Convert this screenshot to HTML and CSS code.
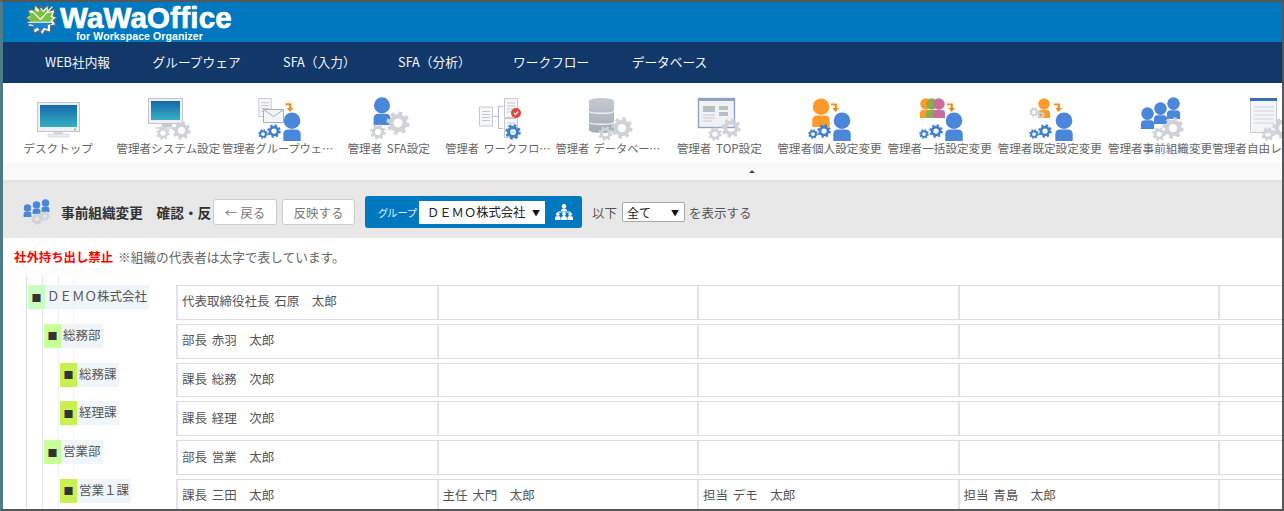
FILE: index.html
```html
<!DOCTYPE html>
<html lang="ja">
<head>
<meta charset="utf-8">
<title>WaWaOffice</title>
<link rel="stylesheet" href="styles.css">
</head>
<body>
<svg class="defs" width="0" height="0">
  <defs>
    <linearGradient id="gScreen" x1="0" y1="0" x2="0" y2="1"><stop offset="0" stop-color="#1668a8"/><stop offset="1" stop-color="#36b0c4"/></linearGradient>
    <linearGradient id="gDb" x1="0" y1="0" x2="0" y2="1"><stop offset="0" stop-color="#c6cad2"/><stop offset="1" stop-color="#a4a9b5"/></linearGradient>
    <linearGradient id="gLogo" x1="0" y1="0" x2="0" y2="1"><stop offset=".56" stop-color="#7ac143"/><stop offset=".56" stop-color="#1f82c8"/></linearGradient>
    <symbol id="gear" viewBox="0 0 24 24" overflow="visible">
      <circle cx="12" cy="12" r="9.6" fill="none" stroke="currentColor" stroke-width="4" stroke-dasharray="3.8 3.74"/>
      <circle cx="12" cy="12" r="6.8" fill="none" stroke="currentColor" stroke-width="4.6"/>
    </symbol>
    <symbol id="person" viewBox="0 0 20 30">
      <circle cx="10" cy="9" r="8.6" fill="currentColor"/>
      <path d="M1 30V23q0-5 5-5h8q5 0 5 5v7z" fill="currentColor"/>
    </symbol>
    <symbol id="arrow" viewBox="0 0 10 11">
      <path d="M0 1.500h6.500v5H9L5 11 1.500 6.500H4V3.500H0z" fill="#f98a14"/>
    </symbol>
    <symbol id="doc" viewBox="0 0 14 20">
      <path d="M.5.5h13v19H.5z" fill="#f6f7f9" stroke="#c4c8cf"/>
      <path d="M3 5h8M3 8h8M3 11h8M3 14h8" stroke="#c4c8cf"/>
    </symbol>
  </defs>
</svg>
<div class="frame">
  <header class="brand">
    <div class="logo">
      <svg class="logo-mark" viewBox="0 0 36 36" width="33" height="33">
        <path d="M18 3l3 4 5-5 1 7 7-2-2 7 4 2-4 3 3 5-6 1 0 7-6-2-3 5-3-5-6 3-1-7-6-1 3-6-5-3 5-3-3-6 7 2 1-7 5 5z" fill="#fff" stroke="#5c6b70" stroke-width="1.400"/>
        <path d="M18 6l3 4 4-4 1 5 5-1-2 5 3 2-3 2 2 4-5 1 0 5-4-2-4 5-3-5-4 2-1-5-5-1 2-4-4-2 4-2-2-5 5 1 1-5 4 4z" fill="url(#gLogo)"/>
        <path d="M18 18L31 4M18 18L8 8M4 21h28" stroke="#fff" stroke-width="1.300"/>
      </svg>
      <div class="logo-text">
        <div class="logo-name">WaWaOffice</div>
        <div class="logo-sub">for Workspace Organizer</div>
      </div>
    </div>
  </header>
  <nav class="mainnav">
    <span>WEB社内報</span>
    <span>グループウェア</span>
    <span>SFA（入力）</span>
    <span>SFA（分析）</span>
    <span>ワークフロー</span>
    <span>データベース</span>
  </nav>
  <section class="tools">
    <div class="tool">
      <svg class="ico" viewBox="0 0 56 44">
        <rect x="7.500" y="5.500" width="42" height="29" fill="#eef0f3" stroke="#c2c6cc"/>
        <rect x="10" y="8" width="37" height="22" fill="url(#gScreen)"/>
        <circle cx="45" cy="32.500" r="1" fill="#7ac143"/>
        <path d="M24 35h9v2h-9z" fill="#d6d9de"/><path d="M18 37h21v3H18z" fill="#eceef1" stroke="#c8ccd2" stroke-width=".6"/>
      </svg>
      <div class="tool-label">デスクトップ</div>
    </div>
    <div class="tool">
      <svg class="ico" viewBox="0 0 56 44">
        <rect x="8.500" y="1.500" width="34" height="25" fill="#eef0f3" stroke="#c2c6cc"/>
        <rect x="11" y="4" width="29" height="19" fill="url(#gScreen)"/>
        <path d="M22 27h10v3H22z" fill="#c8ccd2"/><path d="M15 30h22v2H15z" fill="#dcdfe4"/>
        <use href="#gear" class="c-gear" x="16" y="29" width="14" height="14"/>
        <use href="#gear" class="c-gear" x="32" y="24" width="19" height="19"/>
      </svg>
      <div class="tool-label">管理者システム設定</div>
    </div>
    <div class="tool">
      <svg class="ico" viewBox="0 0 56 44">
        <use href="#doc" x="8" y="1" width="14" height="19"/>
        <path d="M13.500 12.500h20v13h-20z" fill="#f4f5f7" stroke="#a8adb5"/>
        <path d="M13.500 12.500l10 7 10-7" fill="none" stroke="#a8adb5"/>
        <use href="#arrow" x="35" y="5" width="10" height="10"/>
        <use href="#person" class="c-blue" x="32" y="15" width="20" height="29"/>
        <use href="#gear" class="c-bluegear" x="17" y="27" width="14" height="14"/>
        <use href="#gear" class="c-bluegear" x="8" y="32" width="10" height="10"/>
      </svg>
      <div class="tool-label cut">管理者グループウェア設定</div>
    </div>
    <div class="tool">
      <svg class="ico" viewBox="0 0 56 44">
        <use href="#person" class="c-blue" x="11" y="0" width="20" height="28"/>
        <use href="#gear" class="c-gear" x="25" y="14" width="24" height="24"/>
        <use href="#gear" class="c-gear" x="9" y="27" width="16" height="16"/>
      </svg>
      <div class="tool-label">管理者 SFA設定</div>
    </div>
    <div class="tool">
      <svg class="ico" viewBox="0 0 56 44">
        <use href="#doc" x="8" y="9" width="14" height="21"/>
        <use href="#doc" x="33" y="1" width="14" height="20"/>
        <use href="#doc" x="33" y="21" width="14" height="20"/>
        <path d="M22 19.500h5.500M32 9.500h-4.500v22H32" fill="none" stroke="#b8bcc4"/>
        <circle cx="45" cy="16" r="5" fill="#e8433f"/>
        <path d="M43 16l1.500 1.500L47 14.500" fill="none" stroke="#fff" stroke-width="1.200"/>
        <use href="#gear" class="c-bluegear" x="34" y="27" width="16" height="16"/>
      </svg>
      <div class="tool-label cut cut-shift">管理者 ワークフロー設定</div>
    </div>
    <div class="tool">
      <svg class="ico" viewBox="0 0 56 44">
        <path d="M8 4c0-4 25-4 25 0v29c0 4-25 4-25 0z" fill="url(#gDb)"/>
        <path d="M8 14c0 3 25 3 25 0M8 25c0 3 25 3 25 0" fill="none" stroke="#f2f3f5" stroke-width="1.400"/>
        <use href="#gear" class="c-gear" x="30" y="20" width="22" height="22"/>
        <use href="#gear" class="c-gear" x="17" y="29" width="15" height="15"/>
      </svg>
      <div class="tool-label cut cut-shift">管理者 データベース設定</div>
    </div>
    <div class="tool">
      <svg class="ico" viewBox="0 0 56 44">
        <rect x="7.500" y="1.500" width="36" height="29" fill="#f1f2f3" stroke="#8ea3c4" stroke-width="1.400"/>
        <path d="M7 1h37v3H7z" fill="#8ea3c4"/>
        <path d="M12 9h12v6H12zM28 9h9v4h-9zM28 15h9v4h-9z" fill="#b8bec6"/>
        <path d="M12 18h12M12 21h12M12 24h9" stroke="#c6cbd2"/>
        <use href="#gear" class="c-gear" x="30" y="21" width="20" height="20"/>
        <use href="#gear" class="c-gear" x="17" y="30" width="14" height="14"/>
      </svg>
      <div class="tool-label">管理者 TOP設定</div>
    </div>
    <div class="tool">
      <svg class="ico" viewBox="0 0 56 44">
        <use href="#person" class="c-orange" x="10" y="1" width="20" height="29"/>
        <use href="#arrow" x="30" y="5" width="9" height="10"/>
        <use href="#person" class="c-blue" x="31" y="15" width="20" height="29"/>
        <use href="#gear" class="c-bluegear" x="16" y="27" width="14" height="14"/>
        <use href="#gear" class="c-bluegear" x="7" y="32" width="10" height="10"/>
      </svg>
      <div class="tool-label">管理者個人設定変更</div>
    </div>
    <div class="tool">
      <svg class="ico" viewBox="0 0 56 44">
        <use href="#person" class="c-orange" x="7" y="1" width="14" height="20"/>
        <use href="#person" class="c-green" x="13" y="1" width="14" height="20"/>
        <use href="#person" class="c-pink" x="20" y="1" width="14" height="20"/>
        <use href="#arrow" x="35" y="5" width="9" height="10"/>
        <use href="#person" class="c-blue" x="32" y="15" width="20" height="29"/>
        <use href="#gear" class="c-bluegear" x="17" y="27" width="14" height="14"/>
        <use href="#gear" class="c-bluegear" x="7" y="32" width="10" height="10"/>
      </svg>
      <div class="tool-label">管理者一括設定変更</div>
    </div>
    <div class="tool">
      <svg class="ico" viewBox="0 0 56 44">
        <use href="#person" class="c-orange" x="15" y="1" width="14" height="20"/>
        <use href="#gear" class="c-gear" x="7" y="10" width="10" height="10"/>
        <use href="#gear" class="c-gear" x="15" y="14" width="8" height="8"/>
        <use href="#arrow" x="32" y="5" width="9" height="10"/>
        <use href="#person" class="c-blue" x="32" y="15" width="20" height="29"/>
        <use href="#gear" class="c-bluegear" x="16" y="27" width="14" height="14"/>
        <use href="#gear" class="c-bluegear" x="7" y="32" width="10" height="10"/>
      </svg>
      <div class="tool-label">管理者既定設定変更</div>
    </div>
    <div class="tool">
      <svg class="ico" viewBox="0 0 56 44">
        <use href="#person" class="c-blue" x="34" y="0" width="15" height="22"/>
        <use href="#person" class="c-blue" x="21" y="5" width="15" height="22"/>
        <use href="#person" class="c-blue" x="8" y="10" width="15" height="22"/>
        <use href="#gear" class="c-gear" x="30" y="20" width="22" height="22"/>
        <use href="#gear" class="c-gear" x="20" y="30" width="14" height="14"/>
      </svg>
      <div class="tool-label">管理者事前組織変更</div>
    </div>
    <div class="tool">
      <svg class="ico" viewBox="0 0 56 44">
        <rect x="8.500" y="1.500" width="26" height="34" fill="#f3f5f8" stroke="#c4c8cf"/>
        <path d="M8 1h27v3H8z" fill="#3a6fb5"/>
        <path d="M12 10h20M12 14h20M12 18h20M12 22h20M12 26h20" stroke="#d0d4da"/>
        <use href="#gear" class="c-gear" x="30" y="20" width="22" height="22"/>
        <use href="#gear" class="c-gear" x="19" y="30" width="14" height="14"/>
      </svg>
      <div class="tool-label">管理者自由レイアウト</div>
    </div>
  </section>
  <div class="collapse"><span class="caret"></span></div>
  <section class="bar">
    <svg class="bar-ico" viewBox="0 0 28 28">
      <use href="#person" class="c-blue" x="19" y="1" width="9" height="13"/>
      <use href="#person" class="c-blue" x="10" y="3" width="9" height="13"/>
      <use href="#person" class="c-blue" x="1" y="6" width="9" height="13"/>
      <use href="#gear" class="c-gear" x="9" y="15" width="12" height="12"/>
      <use href="#gear" class="c-gear" x="18" y="13" width="10" height="10"/>
    </svg>
    <h1 class="bar-title">事前組織変更　確認・反映</h1>
    <div class="btn btn-back">← 戻る</div>
    <div class="btn btn-apply">反映する</div>
    <div class="group">
      <span class="group-label">グループ</span>
      <div class="group-select"><span>ＤＥＭＯ株式会社</span><span class="tri">▼</span></div>
      <svg class="org-ico" viewBox="0 0 18 16" width="18" height="16">
        <circle cx="9" cy="2.200" r="2.200" fill="#fff"/>
        <path d="M6 7q0-2.500 3-2.500t3 2.500zM0 16v-2q0-2 2.800-2t2.800 2v2zM6.200 16v-2q0-2 2.800-2t2.800 2v2zM12.400 16v-2q0-2 2.800-2t2.800 2v2z" fill="#fff"/>
        <circle cx="2.800" cy="10.300" r="1.800" fill="#fff"/><circle cx="9" cy="10.300" r="1.800" fill="#fff"/><circle cx="15.200" cy="10.300" r="1.800" fill="#fff"/>
        <path d="M9 7v1.500M2.800 8.500V8h12.400v.5" fill="none" stroke="#fff"/>
      </svg>
    </div>
    <span class="lbl-below">以下</span>
    <div class="small-select"><span>全て</span><span class="tri">▼</span></div>
    <span class="lbl-show">を表示する</span>
  </section>
  <p class="notice"><strong>社外持ち出し禁止</strong> ※組織の代表者は太字で表しています。</p>
  <section class="org">
    <div class="row">
      <div class="tree lv1"><span class="mark">■</span><span class="node">ＤＥＭＯ株式会社</span></div>
      <div class="cells"><div class="cell">代表取締役社長 石原　太郎</div><div class="cell"></div><div class="cell"></div><div class="cell"></div><div class="cell"></div></div>
    </div>
    <div class="row">
      <div class="tree lv2"><span class="mark">■</span><span class="node">総務部</span></div>
      <div class="cells"><div class="cell">部長 赤羽　太郎</div><div class="cell"></div><div class="cell"></div><div class="cell"></div><div class="cell"></div></div>
    </div>
    <div class="row">
      <div class="tree lv3"><span class="mark">■</span><span class="node">総務課</span></div>
      <div class="cells"><div class="cell">課長 総務　次郎</div><div class="cell"></div><div class="cell"></div><div class="cell"></div><div class="cell"></div></div>
    </div>
    <div class="row">
      <div class="tree lv3"><span class="mark">■</span><span class="node">経理課</span></div>
      <div class="cells"><div class="cell">課長 経理　次郎</div><div class="cell"></div><div class="cell"></div><div class="cell"></div><div class="cell"></div></div>
    </div>
    <div class="row">
      <div class="tree lv2"><span class="mark">■</span><span class="node">営業部</span></div>
      <div class="cells"><div class="cell">部長 営業　太郎</div><div class="cell"></div><div class="cell"></div><div class="cell"></div><div class="cell"></div></div>
    </div>
    <div class="row">
      <div class="tree lv3"><span class="mark">■</span><span class="node">営業１課</span></div>
      <div class="cells"><div class="cell">課長 三田　太郎</div><div class="cell">主任 大門　太郎</div><div class="cell">担当 デモ　太郎</div><div class="cell">担当 青島　太郎</div><div class="cell"></div></div>
    </div>
  </section>
</div>
</body>
</html>
```
FILE: styles.css
```css
* { box-sizing: border-box; }
html, body { margin: 0; padding: 0; height: 100%; background: #fff; }
body {
  font-family: "Noto Sans CJK JP", "Noto Sans", sans-serif;
  font-size: 12.500px;
  color: #555;
  overflow: hidden;
}
.defs { position: absolute; }
.frame {
  width: 1284px;
  height: 511px;
  border-style: solid;
  border-width: 2px 2px 2px 3px;
  border-color: #565656 #565656 #565656 #4d7c88;
  overflow: hidden;
  background: #fff;
}
.brand {
  height: 40px;
  background: #0078bf;
  padding-left: 21px;
}
.logo { display: flex; gap: 3px; align-items: flex-start; padding-top: 1px; }
.logo-mark { flex: none; }
.logo-text {
  font-family: "Liberation Sans", sans-serif;
  font-weight: 700;
  color: #fff;
}
.logo-name {
  font-size: 29.500px;
  line-height: 30px;
  -webkit-text-stroke: .7px #fff;
  letter-spacing: .2px;
}
.logo-sub {
  font-size: 10.500px;
  line-height: 7px;
  padding-left: 16px;
  letter-spacing: .1px;
}
.mainnav {
  height: 41px;
  background: #12386a;
  display: flex;
  align-items: center;
  gap: 42.500px;
  padding: 0 0 3px 42px;
  color: #f4f6fa;
  font-size: 12.700px;
}
.tools {
  height: 80px;
  display: flex;
  overflow: hidden;
  padding-top: 14px;
  background: #fff;
}
.tool {
  flex: 0 0 110.200px;
  width: 110.200px;
  display: flex;
  flex-direction: column;
  align-items: center;
}
.ico { width: 56px; height: 44px; display: block; flex: none; }
.tool-label {
  width: 116.500px;
  flex: none;
  margin-top: -1px;
  text-align: center;
  font-size: 11.600px;
  word-spacing: 2px;
  line-height: 16px;
  color: #666;
  white-space: nowrap;
  overflow: hidden;
  text-overflow: ellipsis;
}
.cut { width: 113px; font-size: 11.200px; }
.cut-shift { width: 110px; margin-left: 3px; }
.c-gear { color: #cfd2d6; }
.c-blue { color: #4a86da; }
.c-bluegear { color: #3f7fd0; }
.c-orange { color: #fb9a28; }
.c-green { color: #8bab4c; }
.c-pink { color: #c66c9f; }
.collapse {
  height: 17px;
  background: #f9f9f9;
  display: flex;
  justify-content: center;
  align-items: center;
  padding-left: 219px;
}
.caret {
  width: 0;
  height: 0;
  border-left: 3px solid transparent;
  border-right: 3px solid transparent;
  border-bottom: 3px solid #444;
}
.bar {
  height: 58px;
  background: #e8e8e8;
  border-top: 3px solid #e2e2e2;
  display: flex;
  align-items: center;
  padding: 3px 0 0 19px;
}
.bar-ico { width: 28px; height: 28px; flex: none; }
.bar-title {
  margin: 0 2px 0 11px;
  width: 150px;
  flex: none;
  font-size: 13.670px;
  font-weight: 700;
  color: #333;
  white-space: nowrap;
  overflow: hidden;
}
.btn {
  height: 26px;
  flex: none;
  background: #fff;
  border: 1px solid #ccc;
  border-radius: 3px;
  color: #777;
  font-size: 12.500px;
  display: flex;
  align-items: center;
  justify-content: center;
}
.btn-back { width: 64px; }
.btn-apply { width: 73px; margin-left: 5px; }
.group {
  margin-left: 10px;
  width: 217px;
  height: 32px;
  flex: none;
  background: #0078bf;
  border-radius: 3px;
  display: flex;
  align-items: center;
  padding-left: 13px;
  color: #dfeefa;
}
.group-label {
  font-size: 10.500px;
  width: 41px;
  flex: none;
  font-feature-settings: "palt";
}
.group-select {
  width: 126px;
  height: 23px;
  flex: none;
  background: #fff;
  color: #222;
  display: flex;
  align-items: center;
  justify-content: space-between;
  padding: 0 5px 0 8px;
  font-size: 12.300px;
}
.tri { font-size: 8px; color: #111; }
.org-ico { margin-left: 10px; flex: none; }
.lbl-below { margin-left: 10px; }
.small-select {
  margin-left: 5px;
  width: 63px;
  height: 20px;
  flex: none;
  background: #fff;
  border: 1px solid #aaa;
  border-radius: 2px;
  color: #222;
  font-size: 12px;
  display: flex;
  align-items: center;
  justify-content: space-between;
  padding: 0 5px 0 4px;
}
.lbl-show { margin-left: 4px; }
.notice {
  margin: 0;
  height: 37px;
  padding: 10px 0 0 11px;
  font-size: 12.700px;
  line-height: 18px;
  color: #666;
}
.notice strong { color: #f00; font-size: 12.400px; margin-right: 2px; }
.org {
  padding: 10px 0 0 0;
  display: flex;
  flex-direction: column;
  gap: 4px;
  background-image:
    linear-gradient(#d6dbe6, #d6dbe6),
    linear-gradient(#e2e5ec, #e2e5ec),
    linear-gradient(#eceef2, #eceef2),
    linear-gradient(#f2f3f6, #f2f3f6);
  background-size: 1px 100%;
  background-repeat: no-repeat;
  background-position: 23px 0, 39px 0, 55px 0, 70px 0;
  height: 240px;
}
.row { display: flex; height: 34.800px; flex: none; }
.tree { width: 173px; flex: none; display: flex; align-items: flex-start; }
.lv1 { padding-left: 25px; }
.lv2 { padding-left: 41px; }
.lv3 { padding-left: 57px; }
.mark {
  width: 17px;
  height: 24px;
  font-size: 10px;
  color: #333;
  display: flex;
  align-items: center;
  justify-content: center;
}
.lv1 .mark { background: #c8ffc0; }
.lv2 .mark { background: #c8ff96; }
.lv3 .mark { background: #c8f050; }
.node {
  height: 24px;
  line-height: 22px;
  padding: 0 2px 0 2px;
  background: #eff5f8;
  font-size: 12.500px;
  color: #555;
  white-space: nowrap;
}
.cells {
  display: flex;
  flex: none;
  width: 1304px;
  border: 1px solid #dcdce8;
  border-width: 1.500px 0;
}
.cell {
  width: 260.500px;
  flex: none;
  border-left: 2px solid #e2e2ec;
  padding: 0 0 3px 4px;
  display: flex;
  align-items: center;
  white-space: nowrap;
  font-size: 12.500px;
  word-spacing: 2px;
  color: #555;
}
```
